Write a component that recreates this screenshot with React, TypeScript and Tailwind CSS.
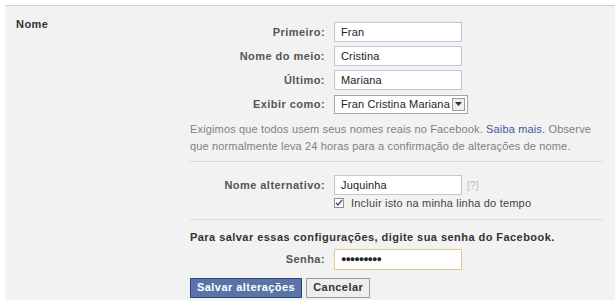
import React from 'react';

const font = { fontFamily: '"Liberation Sans", Arial, sans-serif' };

const Row: React.FC<{ label: string; children: React.ReactNode }> = ({ label, children }) => (
  <div className="flex items-center h-6">
    <div className="w-[144px] pr-[9px] text-right font-bold tracking-[0.45px] text-[#555]">{label}</div>
    {children}
  </div>
);

const TextInput: React.FC<{ value: string; className?: string }> = ({ value, className }) => (
  <div
    className={`w-[128px] h-[20px] bg-white border border-[#bdc7d8] px-[6px] flex items-center text-[#222] ${className ?? ''}`}
  >
    {value}
  </div>
);

export default function App() {
  return (
    <div className="w-[615px] h-[300px] bg-white pl-[5px] pt-[5px] text-[11px] tracking-[0.15px]" style={font}>
      <div className="h-full bg-[#f2f2f2] border-t border-[#cccccc] flex">
        {/* Left: section title */}
        <div className="w-[185px] pl-[11px] pt-[10px] font-bold tracking-[0.45px] text-[#333]">Nome</div>

        {/* Right: form */}
        <div className="w-[413px] pt-[14px]">
          <div className="flex flex-col">
            <Row label="Primeiro:">
              <TextInput value="Fran" />
            </Row>
            <Row label="Nome do meio:">
              <TextInput value="Cristina" />
            </Row>
            <Row label="Último:">
              <TextInput value="Mariana" />
            </Row>
            <Row label="Exibir como:">
              <div className="h-[19px] border border-[#a5a5a5] bg-white flex items-center pl-[6px] pr-[2px] text-[#222]">
                <span className="pr-[2px]">Fran Cristina Mariana</span>
                <div className="w-[13px] h-[13px] border border-[#9a9a9a] bg-[#eee] flex items-center justify-center">
                  <svg width="7" height="4" viewBox="0 0 7 4">
                    <path d="M0 0h7L3.5 4z" fill="#333" />
                  </svg>
                </div>
              </div>
            </Row>
          </div>

          <div className="mt-[5px] text-[#808080] leading-[17px] w-[405px]">
            <div>
              Exigimos que todos usem seus nomes reais no Facebook.{' '}
              <span className="text-[#3b5998]">Saiba mais.</span> Observe
            </div>
            <div>que normalmente leva 24 horas para a confirmação de alterações de nome.</div>
          </div>

          <div className="mt-[6px] border-t border-[#d9d9d9] w-[413px]" />

          <div className="mt-[11px]">
            <Row label="Nome alternativo:">
              <TextInput value="Juquinha" className="w-[127px]" />
              <span className="ml-[5px] text-[#bbb] text-[10px]">[?]</span>
            </Row>
            <div className="flex items-center ml-[144px] h-[12px]">
              <div className="w-[10px] h-[10px] border border-[#8e8f8f] bg-white flex items-center justify-center">
                <svg width="8" height="8" viewBox="0 0 8 8">
                  <path d="M1 4l2 2 4-5" fill="none" stroke="#3a4d78" strokeWidth="1.4" />
                </svg>
              </div>
              <span className="ml-[7px] text-[#444] tracking-[0.2px]">Incluir isto na minha linha do tempo</span>
            </div>
          </div>

          <div className="mt-[10px] border-t border-[#d9d9d9] w-[413px]" />

          <div className="mt-[9px] font-bold tracking-[0.45px] text-[#333]">
            Para salvar essas configurações, digite sua senha do Facebook.
          </div>

          <div className="mt-[2px]">
            <Row label="Senha:">
              <div className="w-[128px] h-[21px] bg-white border border-[#e2c98d] px-[6px] flex items-center text-[#222] tracking-[-1px] text-[9px]">
                ●●●●●●●●●
              </div>
            </Row>
          </div>

          <div className="mt-[6px] flex gap-[4px]">
            <button className="h-[20px] px-[6px] bg-[#5b74a8] border border-[#29447e] text-white font-bold tracking-[0.45px]">
              Salvar alterações
            </button>
            <button className="h-[20px] px-[6px] bg-[#eeeeee] border border-[#999] text-[#333] font-bold tracking-[0.45px]">
              Cancelar
            </button>
          </div>
        </div>
      </div>
    </div>
  );
}
